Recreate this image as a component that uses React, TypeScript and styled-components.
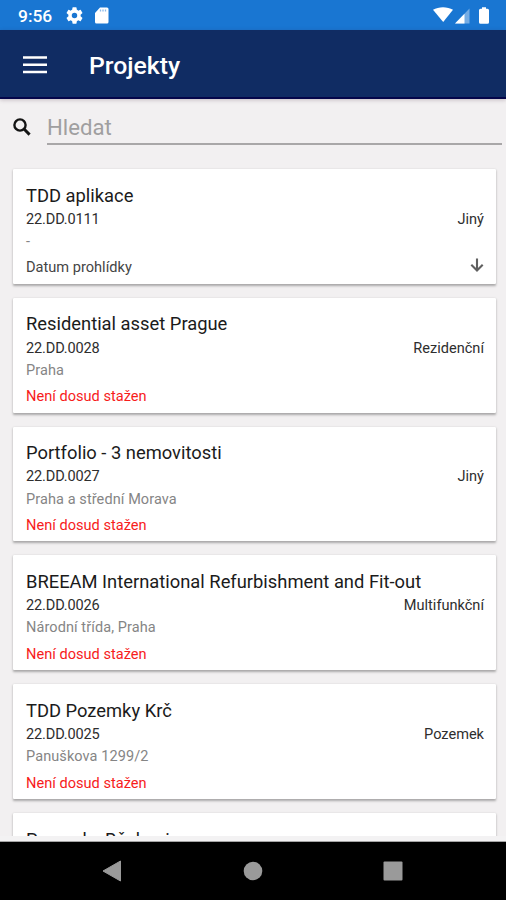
import React from "react";
import styled, { createGlobalStyle } from "styled-components";

const GlobalStyle = createGlobalStyle`
  *, *::before, *::after { box-sizing: border-box; }
  body { margin: 0; background: #f2f0f1; font-family: Roboto, "Noto Sans", sans-serif; }
`;

const Screen = styled.div`
  display: flex;
  flex-direction: column;
  width: 506px;
  height: 900px;
  overflow: hidden;
  background: #f2f0f1;
`;

const StatusBar = styled.div`
  flex: none;
  display: flex;
  align-items: center;
  height: 30px;
  padding: 1px 15px 0 18px;
  background: #1976d2;
  color: #fff;
`;

const Clock = styled.span`
  width: 48px;
  font-size: 17.4px;
  font-weight: 500;
  line-height: 28px;
`;

const StatusIcons = styled.div`
  display: flex;
  align-items: center;
  gap: 12px;
`;

const SystemIcons = styled(StatusIcons)`
  margin-left: auto;
`;

const AppBar = styled.header`
  flex: none;
  display: flex;
  align-items: center;
  height: 69px;
  padding-left: 23px;
  background: #102c63;
  border-bottom: 2px solid #05064a;
  box-shadow: 0 1px 4px rgba(60, 30, 50, 0.25);
  color: #fff;
`;

const MenuButton = styled.button`
  display: flex;
  width: 24px;
  margin: 2px 42px 0 0;
  padding: 0;
  border: 0;
  background: none;
  color: inherit;
`;

const Heading = styled.h1`
  margin: 4px 0 0;
  font-size: 24.8px;
  font-weight: 500;
  line-height: 32px;
`;

const SearchRow = styled.label`
  flex: none;
  display: flex;
  align-items: center;
  height: 46px;
  padding: 0 4px 0 13px;

  svg { margin-top: 9px; }
`;

const SearchInput = styled.input`
  flex: 1;
  min-width: 0;
  height: 37px;
  margin: 9px 0 0 16px;
  padding: 2px 0 0;
  border: 0;
  border-bottom: 2px solid #a9a7a8;
  background: none;
  font: 400 22.2px/30px Roboto, sans-serif;
  outline: none;
  &::placeholder { color: #a09fa0; opacity: 1; }
`;

const List = styled.main`
  flex: none;
  display: flex;
  flex-direction: column;
  gap: 14px;
  height: 691px;
  padding: 24px 10px 0 13px;
  overflow: hidden;
`;

const Card = styled.article`
  flex: none;
  height: 114.8px;
  padding: 14.6px 12px 0 13px;
  border-radius: 1px;
  background: #fff;
  box-shadow: 0 1.5px 2.5px rgba(0, 0, 0, 0.3), 0 0 1px rgba(0, 0, 0, 0.08);
`;

const Title = styled.h2`
  margin: 0;
  font-size: 18.35px;
  font-weight: 400;
  line-height: 24px;
  color: #1b1b1b;
`;

const Row = styled.div`
  display: flex;
  justify-content: space-between;
  align-items: center;
  height: 23.4px;
  font-size: 14.55px;
  line-height: 23px;
  color: #2e2e2e;
`;

const Code = styled.span`
  letter-spacing: -0.15px;
`;

const Place = styled.div`
  height: 20px;
  font-size: 14.5px;
  line-height: 21px;
  letter-spacing: 0.09px;
  color: #858585;
`;

const Footer = styled.div<{ $missing: boolean }>`
  display: flex;
  justify-content: space-between;
  align-items: center;
  height: 23px;
  margin-top: 5.4px;
  font-size: 14.6px;
  line-height: 23px;
  color: ${(p) => (p.$missing ? "#f71c1c" : "#454545")};

  svg { margin-bottom: 5px; }
`;

const ListEdge = styled.div`
  flex: none;
  height: 6px;
  background: #f3f2f3;
  border-bottom: 1px solid #a5a5a5;
`;

const NavBar = styled.nav`
  flex: 1;
  display: flex;
  align-items: center;
  padding-left: 102px;
  gap: 120.7px;
  background: #000;
`;

interface Project {
  title: string;
  code?: string;
  kind?: string;
  place?: string;
  downloaded?: boolean;
}

const projects: Project[] = [
  { title: "TDD aplikace", code: "22.DD.0111", kind: "Jiný", place: "-", downloaded: true },
  { title: "Residential asset Prague", code: "22.DD.0028", kind: "Rezidenční", place: "Praha" },
  { title: "Portfolio - 3 nemovitosti", code: "22.DD.0027", kind: "Jiný", place: "Praha a střední Morava" },
  { title: "BREEAM International Refurbishment and Fit-out", code: "22.DD.0026", kind: "Multifunkční", place: "Národní třída, Praha" },
  { title: "TDD Pozemky Krč", code: "22.DD.0025", kind: "Pozemek", place: "Panuškova 1299/2" },
  { title: "Pozemky Běchovice" },
];

const GearIcon = () => (
  <svg width="17" height="17" viewBox="2 2 20 20" fill="currentColor">
    <path d="M19.14 12.94c.04-.3.06-.61.06-.94s-.02-.64-.07-.94l2.03-1.58a.49.49 0 0 0 .12-.61l-1.92-3.32a.49.49 0 0 0-.59-.22l-2.39.96a7 7 0 0 0-1.62-.94l-.36-2.54A.48.48 0 0 0 13.92 2.4h-3.84a.48.48 0 0 0-.47.41l-.36 2.54c-.59.24-1.13.57-1.62.94l-2.39-.96a.48.48 0 0 0-.59.22L2.74 8.87a.48.48 0 0 0 .12.61l2.03 1.58a7 7 0 0 0 0 1.88l-2.03 1.58a.49.49 0 0 0-.12.61l1.92 3.32c.12.22.37.29.59.22l2.39-.96c.5.38 1.03.7 1.62.94l.36 2.54c.05.24.24.41.47.41h3.84c.24 0 .44-.17.47-.41l.36-2.54a7 7 0 0 0 1.62-.94l2.39.96c.22.08.47 0 .59-.22l1.92-3.32a.48.48 0 0 0-.12-.61zM12 15.2a3.2 3.2 0 1 1 0-6.4 3.2 3.2 0 0 1 0 6.4z" />
  </svg>
);

const SdCardIcon = () => (
  <svg width="14" height="17" viewBox="0 0 14 17">
    <path d="M5 .5h7A1.500 1.500 0 0 1 13.500 2v13a1.500 1.500 0 0 1-1.500 1.500H1.500A1.500 1.500 0 0 1 0 15V6z" fill="#fff" />
    <path d="M5.500 2.500v2M8 2.500v2M10.500 2.500v2" stroke="#8bb9e8" strokeWidth="1.300" />
  </svg>
);

const SignalIcons = () => (
  <svg width="58" height="20" viewBox="0 0 58 20" fill="#fff">
    <path d="M0 3.800C5.500.4 14.500.4 20 3.800L10.200 16z" />
    <path d="M36.500 2.500v15H22z" opacity=".4" />
    <path d="M31.500 7.700v9.800H22z" />
    <path d="M47.500 2.800h1.500V1.300h4v1.500h1.500q1.500 0 1.500 1.500v12q0 1.500-1.500 1.500h-7q-1.500 0-1.500-1.500v-12q0-1.500 1.500-1.500z" />
  </svg>
);

const MenuIcon = () => (
  <svg width="24" height="18" viewBox="0 0 24 18">
    <path d="M0 1.500h24M0 8.800h24M0 16h24" stroke="#fff" strokeWidth="2.600" />
  </svg>
);

const SearchIcon = () => (
  <svg width="18" height="18" viewBox="0 0 18 18" fill="none" stroke="#141414">
    <circle cx="7" cy="7" r="5.600" strokeWidth="2.400" />
    <path d="M11 11l5.600 5.600" strokeWidth="2.900" />
  </svg>
);

const DownArrow = () => (
  <svg width="14" height="14" viewBox="0 0 14 14" fill="none" stroke="#606060" strokeWidth="2.100">
    <path d="M7 .5v12M1.300 6.800L7 12.500l5.700-5.700" />
  </svg>
);

const BackIcon = () => (
  <svg width="20" height="22" viewBox="0 0 20 22">
    <path d="M18.500 1v20L1 11z" fill="#9a9a9a" stroke="#9a9a9a" strokeLinejoin="round" />
  </svg>
);

const HomeIcon = () => (
  <svg width="20" height="20" viewBox="0 0 20 20">
    <circle cx="10" cy="10" r="9.300" fill="#9a9a9a" />
  </svg>
);

const RecentIcon = () => (
  <svg width="20" height="20" viewBox="0 0 20 20">
    <rect x=".5" y=".5" width="19" height="19" rx="1" fill="#9a9a9a" />
  </svg>
);

const ProjectCard = ({ title, code, kind, place, downloaded = false }: Project) => (
  <Card>
    <Title>{title}</Title>
    {code && (
      <>
        <Row>
          <Code>{code}</Code>
          <span>{kind}</span>
        </Row>
        <Place>{place}</Place>
        <Footer $missing={!downloaded}>
          <span>{downloaded ? "Datum prohlídky" : "Není dosud stažen"}</span>
          {downloaded && <DownArrow />}
        </Footer>
      </>
    )}
  </Card>
);

export default function App() {
  return (
    <Screen>
      <GlobalStyle />
      <StatusBar>
        <Clock>9:56</Clock>
        <StatusIcons>
          <GearIcon />
          <SdCardIcon />
        </StatusIcons>
        <SystemIcons>
          <SignalIcons />
        </SystemIcons>
      </StatusBar>
      <AppBar>
        <MenuButton aria-label="Menu">
          <MenuIcon />
        </MenuButton>
        <Heading>Projekty</Heading>
      </AppBar>
      <SearchRow>
        <SearchIcon />
        <SearchInput placeholder="Hledat" />
      </SearchRow>
      <List>
        {projects.map((project) => (
          <ProjectCard key={project.title} {...project} />
        ))}
      </List>
      <ListEdge />
      <NavBar>
        <BackIcon />
        <HomeIcon />
        <RecentIcon />
      </NavBar>
    </Screen>
  );
}
